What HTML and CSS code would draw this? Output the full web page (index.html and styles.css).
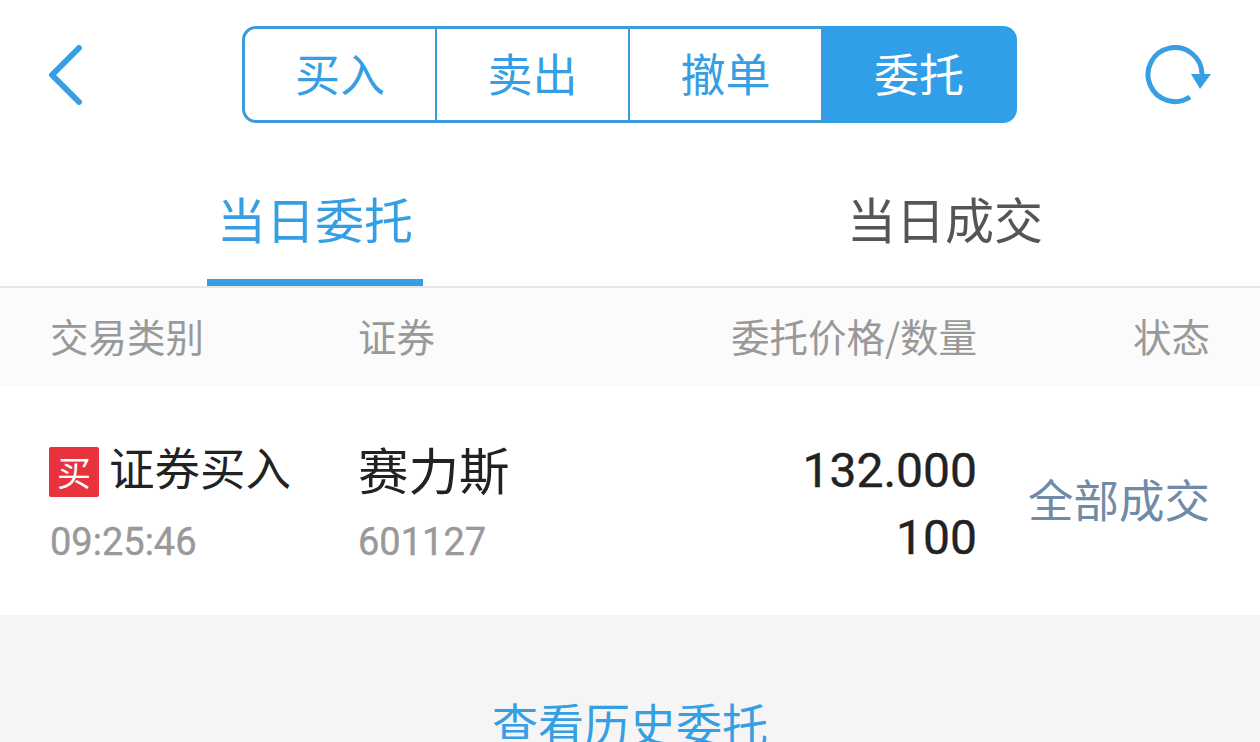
FILE: index.html
```html
<!DOCTYPE html>
<html lang="zh-Hans">
<head>
    <meta charset="UTF-8">
    <meta name="viewport" content="width=device-width, initial-scale=1.0">
    <title>委托</title>
    <link rel="stylesheet" href="styles.css">
</head>
<body>
    <header class="topbar">
        <svg class="icon-back" width="36" height="60" viewBox="0 0 36 60">
            <path d="M31 3 L4 30 L31 57" fill="none" stroke="#369fe3" stroke-width="6" stroke-linecap="round" stroke-linejoin="round"/>
        </svg>
        <nav class="segments">
            <a class="segment">买入</a>
            <a class="segment">卖出</a>
            <a class="segment">撤单</a>
            <a class="segment active">委托</a>
        </nav>
        <svg class="icon-refresh" width="66" height="60" viewBox="0 0 66 60">
            <path d="M45 52 A27 27 0 1 1 57 29" fill="none" stroke="#369fe3" stroke-width="5"/>
            <path d="M46 29 H66 L55 44 Z" fill="#369fe3"/>
        </svg>
    </header>

    <div class="tabs">
        <div class="tab active">当日委托</div>
        <div class="tab">当日成交</div>
    </div>

    <div class="row table-head">
        <div class="col-type">交易类别</div>
        <div class="col-name">证券</div>
        <div class="col-price">委托价格/数量</div>
        <div class="col-status">状态</div>
    </div>

    <div class="row order">
        <div class="col-type">
            <div class="order-type"><span class="badge">买</span>证券买入</div>
            <div class="sub">09:25:46</div>
        </div>
        <div class="col-name">
            <div class="stock-name">赛力斯</div>
            <div class="sub">601127</div>
        </div>
        <div class="col-price order-nums">
            <div class="num">132.000</div>
            <div class="num">100</div>
        </div>
        <div class="col-status status-done">全部成交</div>
    </div>

    <div class="footer">
        <a class="history">查看历史委托</a>
    </div>
</body>
</html>
```

FILE: styles.css
```css
body {
    margin: 0;
    height: 742px;
    overflow: hidden;
    background-color: #f5f5f5;
    font-family: "Noto Sans CJK SC", "Noto Sans", sans-serif;
}
.topbar {
    background-color: white;
    height: 149px;
    box-sizing: border-box;
    padding: 26px 49px 0 48px;
    display: flex;
    justify-content: space-between;
    align-items: flex-start;
}
.icon-back {
    margin-top: 19px;
}
.icon-refresh {
    margin-top: 19px;
}
.segments {
    display: flex;
    width: 775px;
    height: 97px;
    margin-left: 30px;
}
.segment {
    box-sizing: border-box;
    width: 193px;
    padding-bottom: 5px;
    display: flex;
    align-items: center;
    justify-content: center;
    font-size: 45px;
    line-height: 1;
    color: #369fe3;
    border-top: 3px solid #3c9bd8;
    border-bottom: 3px solid #3c9bd8;
    border-right: 2px solid #3c9bd8;
}
.segment:first-child {
    width: 195px;
    border-left: 3px solid #3c9bd8;
    border-radius: 14px 0 0 14px;
}
.segment.active {
    width: 194px;
    background-color: #319fe8;
    color: white;
    border-color: #319fe8;
    border-radius: 0 14px 14px 0;
}
.tabs {
    background-color: white;
    height: 139px;
    box-sizing: border-box;
    display: flex;
    border-bottom: 2px solid #e6e6e6;
}
.tab {
    width: 630px;
    position: relative;
    display: flex;
    justify-content: center;
    align-items: center;
    height: 137px;
    font-size: 49px;
    line-height: 1;
    color: #555;
}
.tab.active {
    color: #369fe3;
}
.tab.active::after {
    content: "";
    position: absolute;
    left: 207px;
    width: 216px;
    bottom: 0;
    height: 7px;
    background-color: #369fe3;
}
.row {
    display: flex;
    padding: 0 50px;
}
.col-type {
    width: 308px;
}
.col-name {
    width: 201px;
}
.col-price {
    width: 418px;
    text-align: right;
}
.col-status {
    flex: 1;
    text-align: right;
}
.table-head {
    height: 94px;
    padding-bottom: 4px;
    align-items: center;
    background-color: #fbfbfb;
    font-size: 38.5px;
    line-height: 1;
    color: #999;
}
.order {
    height: 229px;
    box-sizing: border-box;
    background-color: white;
    align-items: center;
}
.order-type {
    display: flex;
    height: 60px;
    font-size: 45.5px;
    line-height: 56px;
    color: #222;
}
.badge {
    flex: none;
    width: 50px;
    height: 50px;
    margin: 9px 10px 0 -1px;
    border-radius: 2px;
    background-color: #e8333f;
    color: white;
    font-size: 34px;
    line-height: 50px;
    text-align: center;
}
.stock-name {
    font-size: 50.5px;
    line-height: 60px;
    color: #222;
}
.sub {
    margin-top: 22px;
    font-family: "Roboto", sans-serif;
    font-size: 38px;
    line-height: 44px;
    color: #999;
    -webkit-text-stroke: 0.4px #999;
}
.order-nums {
    padding-top: 6px;
}
.num {
    font-family: "Roboto", sans-serif;
    font-size: 48px;
    line-height: 67px;
    color: #222;
    -webkit-text-stroke: 0.4px #222;
}
.status-done {
    padding-bottom: 4px;
    font-size: 45.5px;
    line-height: 1;
    color: #6f8ba8;
}
.footer {
    text-align: center;
    padding-top: 82px;
}
.history {
    font-size: 46px;
    line-height: 50px;
    color: #369fe3;
    display: block;
}
```
